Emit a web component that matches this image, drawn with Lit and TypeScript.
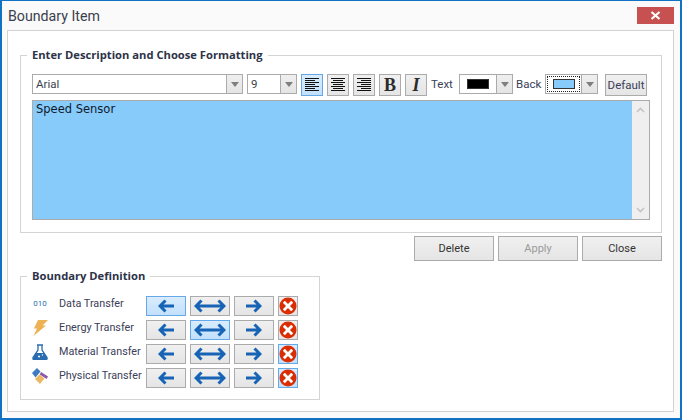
import { LitElement, html, css, svg } from "lit";
import { customElement } from "lit/decorators.js";

const leftArrow = html`<svg class="ico" width="16" height="14" viewBox="0 0 16 14"><path d="M16 7H3M7.500 1.500 2 7l5.500 5.500" fill="none" stroke="#1763b6" stroke-width="3"/></svg>`;
const rightArrow = html`<svg class="ico" width="16" height="14" viewBox="0 0 16 14"><path d="M0 7h13M8.500 1.500 14 7l-5.500 5.500" fill="none" stroke="#1763b6" stroke-width="3"/></svg>`;
const bothArrow = html`<svg class="ico" width="32" height="14" viewBox="0 0 32 14"><path d="M3 7h26M7.500 1.500 2 7l5.500 5.500M24.500 1.500 30 7l-5.500 5.500" fill="none" stroke="#1763b6" stroke-width="3"/></svg>`;
const cancel = html`<svg class="ico" width="18" height="18" viewBox="0 0 18 18"><circle cx="9" cy="9" r="8.500" fill="#dc2c02"/><path d="M5.800 5.800l6.400 6.400M12.200 5.800l-6.400 6.400" stroke="#fff" stroke-width="2.800" stroke-linecap="square"/></svg>`;

const alignLines = (kind: string) => {
  const rows = [0, 1, 2, 3, 4, 5, 6];
  return html`<svg class="ico" width="14" height="14" viewBox="0 0 14 14">${rows.map((i) => {
    const w = i % 2 === 0 ? 14 : 10;
    const x = kind === "l" ? 0 : kind === "c" ? (14 - w) / 2 : 14 - w;
    return svg`<rect x="${x}" y="${i * 2}" width="${w}" height="1" fill="#111"/>`;
  })}</svg>`;
};

const bolt = html`<svg width="15" height="16" viewBox="0 0 15 16"><path d="M5 0h10L9.500 5.500h3.500L.5 16 4 8.500H1z" fill="#edb253"/></svg>`;
const flask = html`<svg width="16" height="16" viewBox="0 0 16 16"><path d="M5 1h6M6 1v5L1 13.500Q.5 15.500 2 15.500h12q1.500 0 1-2L10 6V1" fill="none" stroke="#2a6cb0" stroke-width="1.300"/><path d="M4 9h8l3 5q.3 1.500-1 1.500H2q-1.300 0-1-1.500z" fill="#2a6cb0"/><circle cx="7" cy="12.500" r="1" fill="#fff"/><circle cx="10.500" cy="11" r=".7" fill="#fff"/></svg>`;
const blocks = html`<svg width="16" height="16" viewBox="0 0 16 16"><path d="M0 5 5 0 8.500 3.500 3.500 9.500z" fill="#3e7cc0"/><path d="M9 4l7 4.500-1.300 2.500-7-4.500z" fill="#8a5aa8"/><path d="M3 11 7.500 6.500 12.500 10.500 8 16z" fill="#edb864"/></svg>`;

@customElement("app-root")
export class AppRoot extends LitElement {
  static styles = css`
    :host {
      display: block;
      width: 682px;
      height: 420px;
      font-family: Roboto, "Open Sans", sans-serif;
      color: #2a2f45;
      font-size: 11.500px;
    }
    * { box-sizing: border-box; }
    .win {
      width: 682px;
      height: 420px;
      background: #fafafa;
      border: solid #0f72c4;
      border-width: 1px 2px 2px 2px;
      display: flex;
      flex-direction: column;
    }
    .title {
      height: 29px;
      flex: none;
      display: flex;
      align-items: flex-start;
      justify-content: space-between;
      padding: 6px 6px 0 6px;
    }
    .title span { font-size: 14.200px; line-height: 19px; color: #3b3f4c; }
    .closex {
      width: 37px;
      height: 17px;
      background: #c75050;
      display: flex;
      align-items: center;
      justify-content: center;
    }
    .panel {
      width: 667px;
      height: 382px;
      margin-left: 5px;
      background: #fff;
      border: 1px solid #d2d2d2;
      padding: 17px 12px 0 12px;
    }
    fieldset {
      margin: 0;
      padding: 0;
      border: 1px solid #d4d4d4;
      min-width: 0;
    }
    legend {
      margin-left: -5px;
      padding: 0 5px;
      font-family: "Open Sans", sans-serif;
      font-weight: 700;
      font-size: 11.200px;
      line-height: 14px;
      color: #2d3348;
      white-space: nowrap;
    }
    .desc { width: 642px; height: 185px; padding: 12px 11px 0 11px; }
    .tools { display: flex; align-items: flex-start; height: 22px; }
    .combo {
      height: 20px;
      border: 1px solid #ababab;
      display: flex;
      background: #fff;
      flex: none;
    }
    .combo .val { flex: 1; padding-left: 3px; line-height: 18px; font-size: 11.500px; color: #3a3f50; }
    .combo .drop {
      width: 16px;
      background: linear-gradient(#efefef, #e4e4e4);
      border-left: 1px solid #ababab;
      display: flex;
      align-items: center;
      justify-content: center;
    }
    .tri { width: 0; height: 0; border: 4px solid transparent; border-top: 5px solid #7f7f7f; border-bottom: 0; }
    .font { width: 211px; }
    .size { width: 50px; margin-left: 4px; }
    .sq {
      width: 22px;
      height: 22px;
      border: 1px solid #ababab;
      background: linear-gradient(#f0f0f0, #e5e5e5);
      display: flex;
      align-items: center;
      justify-content: center;
      flex: none;
      margin-left: 4px;
      padding: 0;
    }
    .sq.on, .wide.on {
      border-color: #66a7e8;
      background: linear-gradient(#d9ecfe, #c2e0fc);
    }
    .b, .i { font-family: "Liberation Serif", serif; font-size: 18px; font-weight: 700; color: #2b2b2b; line-height: 20px; }
    .i { font-style: italic; }
    .lab { line-height: 20px; font-size: 11.500px; color: #3a4058; flex: none; }
    .lab.text { margin-left: 4px; width: 28px; }
    .lab.back { margin-left: 3px; width: 29px; }
    .swatch { flex: 1; display: flex; align-items: center; justify-content: center; }
    .swatch i { display: block; width: 22px; height: 10px; border: 1px solid #333; }
    .swatch.focus { margin: 1px; outline: 1px dotted #222; outline-offset: -1px; }
    .color1 { width: 54px; }
    .color2 { width: 53px; }
    .default {
      width: 42px;
      height: 22px;
      margin-left: 7px;
      border: 1px solid #ababab;
      background: linear-gradient(#f0f0f0, #e5e5e5);
      font: 11.500px/20px Roboto, sans-serif;
      color: #3a4058;
      text-align: center;
      padding: 0;
      flex: none;
    }
    .edit {
      margin-top: 4px;
      height: 120px;
      width: 618px;
      border: 1px solid #ababab;
      background: #87cbfa;
      display: flex;
    }
    .edit .txt {
      flex: 1;
      padding: 1px 3px;
      font-family: "DejaVu Sans", sans-serif;
      font-size: 11.500px;
      line-height: 14px;
      color: #10182c;
    }
    .scroll {
      width: 17px;
      background: #efefef;
      display: flex;
      flex-direction: column;
      justify-content: space-between;
      align-items: center;
      padding: 6px 0;
    }
    .actions { display: flex; justify-content: flex-end; gap: 4px; margin-top: 3px; width: 642px; }
    .btn {
      width: 80px;
      height: 25px;
      border: 1px solid #ababab;
      background: linear-gradient(#f0f0f0, #e5e5e5);
      font: 11px/23px Roboto, sans-serif;
      color: #333;
      padding: 0;
      text-align: center;
    }
    .btn.off { color: #9a9a9a; }
    .bound { width: 300px; height: 131px; margin-top: 8px; padding: 13px 0 0 11px; }
    .row { display: flex; align-items: flex-start; height: 20px; margin-bottom: 4px; }
    .glyph { width: 16px; height: 16px; flex: none; display: flex; align-items: center; justify-content: center; }
    .bits { font-size: 8px; color: #2a6cb0; line-height: 12px; }
    .name { width: 87px; margin-left: 11px; flex: none; font-size: 10.800px; line-height: 16px; white-space: nowrap; color: #3a4058; }
    .wide {
      width: 40px;
      height: 20px;
      margin-right: 4px;
      border: 1px solid #ababab;
      background: linear-gradient(#f0f0f0, #e5e5e5);
      display: flex;
      align-items: center;
      justify-content: center;
      flex: none;
    }
    .wide.x { width: 20px; margin-right: 0; }
    .ico { display: block; flex: none; }
  `;

  private row(name: string, glyph: unknown, active: number) {
    const c = (i: number) => (active === i ? "wide on" : "wide");
    return html`<div class="row">
      <div class="glyph">${glyph}</div>
      <div class="name">${name}</div>
      <div class=${c(0)}>${leftArrow}</div>
      <div class=${c(1)}>${bothArrow}</div>
      <div class=${c(2)}>${rightArrow}</div>
      <div class="${c(3)} x">${cancel}</div>
    </div>`;
  }

  render() {
    return html`<div class="win">
      <div class="title">
        <span>Boundary Item</span>
        <div class="closex">
          <svg width="11" height="9" viewBox="0 0 11 9"><path d="M1.500 1l8 7M9.500 1l-8 7" stroke="#fff" stroke-width="2.200"/></svg>
        </div>
      </div>
      <div class="panel">
        <fieldset class="desc">
          <legend>Enter Description and Choose Formatting</legend>
          <div class="tools">
            <div class="combo font"><div class="val">Arial</div><div class="drop"><div class="tri"></div></div></div>
            <div class="combo size"><div class="val">9</div><div class="drop"><div class="tri"></div></div></div>
            <div class="sq on">${alignLines("l")}</div>
            <div class="sq">${alignLines("c")}</div>
            <div class="sq">${alignLines("r")}</div>
            <div class="sq b">B</div>
            <div class="sq i">I</div>
            <div class="lab text">Text</div>
            <div class="combo color1"><div class="swatch"><i style="background:#000"></i></div><div class="drop"><div class="tri"></div></div></div>
            <div class="lab back">Back</div>
            <div class="combo color2"><div class="swatch focus"><i style="background:#87cbfa"></i></div><div class="drop"><div class="tri"></div></div></div>
            <button class="default">Default</button>
          </div>
          <div class="edit">
            <div class="txt">Speed Sensor</div>
            <div class="scroll">
              <svg width="9" height="6" viewBox="0 0 9 6"><path d="M1 5l3.500-3.500L8 5" fill="none" stroke="#c4c4c4" stroke-width="1.600"/></svg>
              <svg width="9" height="6" viewBox="0 0 9 6"><path d="M1 1l3.500 3.500L8 1" fill="none" stroke="#c4c4c4" stroke-width="1.600"/></svg>
            </div>
          </div>
        </fieldset>
        <div class="actions">
          <button class="btn">Delete</button>
          <button class="btn off">Apply</button>
          <button class="btn">Close</button>
        </div>
        <fieldset class="bound">
          <legend>Boundary Definition</legend>
          ${this.row("Data Transfer", html`<span class="bits">010</span>`, 0)}
          ${this.row("Energy Transfer", bolt, 1)}
          ${this.row("Material Transfer", flask, 3)}
          ${this.row("Physical Transfer", blocks, 3)}
        </fieldset>
      </div>
    </div>`;
  }
}
